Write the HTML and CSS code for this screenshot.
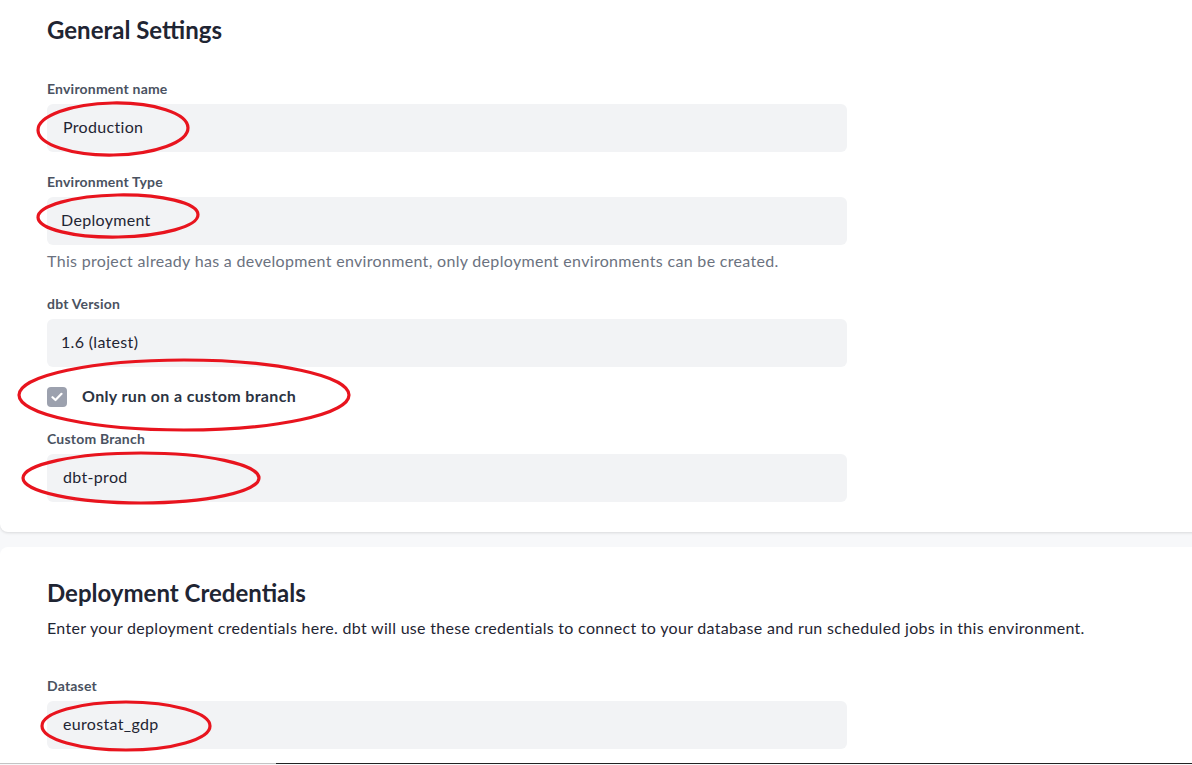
FILE: index.html
```html
<!DOCTYPE html>
<html lang="en">
<head>
<meta charset="utf-8">
<title>Environment settings</title>
<link rel="stylesheet" href="styles.css">
</head>
<body>
<div class="page">
  <section class="card card-first">
    <h2 class="card-title">General Settings</h2>

    <div class="field field-first">
      <div class="label">Environment name</div>
      <div class="input">Production</div>
    </div>

    <div class="field">
      <div class="label">Environment Type</div>
      <div class="input input-tight">Deployment</div>
      <div class="help">This project already has a development environment, only deployment environments can be created.</div>
    </div>

    <div class="field field-after-help">
      <div class="label">dbt Version</div>
      <div class="input input-tight">1.6 (latest)</div>
    </div>

    <div class="check-row">
      <span class="checkbox">
        <svg width="12" height="10" viewBox="0 0 12 10"><path d="M1.5 5.2 L4.5 8 L10.5 1.8" fill="none" stroke="#fff" stroke-width="2.2" stroke-linecap="round" stroke-linejoin="round"/></svg>
      </span>
      <span class="check-label">Only run on a custom branch</span>
    </div>

    <div class="field field-after-check">
      <div class="label">Custom Branch</div>
      <div class="input">dbt-prod</div>
    </div>
  </section>

  <section class="card card-second">
    <h2 class="card-title">Deployment Credentials</h2>
    <p class="desc">Enter your deployment credentials here. dbt will use these credentials to connect to your database and run scheduled jobs in this environment.</p>
    <div class="field field-dataset">
      <div class="label">Dataset</div>
      <div class="input">eurostat_gdp</div>
    </div>
  </section>

  <div class="bottom-line"><span class="line-light"></span><span class="line-dark"></span></div>
</div>

<svg class="marks" width="1192" height="765" viewBox="0 0 1192 765">
  <g fill="none" stroke="#e8141e" stroke-width="3.2">
    <ellipse cx="113" cy="129" rx="75" ry="26" transform="rotate(-1 113 129)"/>
    <ellipse cx="118" cy="216" rx="80" ry="21" transform="rotate(-1 118 216)"/>
    <ellipse cx="184" cy="395" rx="165" ry="35"/>
    <ellipse cx="141" cy="478" rx="118" ry="25"/>
    <ellipse cx="126" cy="726" rx="84" ry="24"/>
  </g>
</svg>
</body>
</html>
```

FILE: styles.css
```css
* { box-sizing: border-box; }

html, body {
  margin: 0;
  padding: 0;
}

body {
  width: 1192px;
  height: 765px;
  overflow: hidden;
  background: #f7f8fa;
  font-family: "Source Sans Pro", "Lato", "Liberation Sans", sans-serif;
  color: #1f2533;
  position: relative;
}

.page {
  display: flex;
  flex-direction: column;
  gap: 15px;
}

.card {
  background: #ffffff;
  margin-right: -24px;
  padding-left: 47px;
  display: flex;
  flex-direction: column;
  align-items: flex-start;
}

.card-first {
  margin-top: -20px;
  padding-top: 34px;
  padding-bottom: 30px;
  border-radius: 8px;
  box-shadow: 0 1px 3px rgba(0, 0, 0, 0.12);
}

.card-second {
  height: 216px;
  padding-top: 30px;
  border-radius: 8px 8px 0 0;
}

.card-title {
  margin: 0;
  font-size: 24px;
  line-height: 32px;
  font-weight: 700;
  color: #1f2533;
}

.field {
  display: flex;
  flex-direction: column;
  gap: 5px;
  margin-top: 20px;
}

.field-first { margin-top: 33px; }
.field-after-help { margin-top: 21px; }
.field-after-check { margin-top: 20px; }
.field-dataset { margin-top: 36px; }

.label {
  font-size: 14px;
  line-height: 20px;
  font-weight: 700;
  letter-spacing: 0.2px;
  color: #4a5261;
}

.input {
  width: 800px;
  height: 48px;
  border-radius: 6px;
  background: #f2f3f5;
  display: flex;
  align-items: center;
  padding-left: 16px;
  padding-bottom: 3px;
  font-size: 16px;
  letter-spacing: 0.32px;
  color: #1f2533;
}

.input-tight { padding-left: 14px; }

.help {
  margin-top: -1px;
  font-size: 16px;
  line-height: 24px;
  letter-spacing: 0.32px;
  color: #6b7280;
}

.check-row {
  display: flex;
  align-items: center;
  gap: 15px;
  margin-top: 18px;
  height: 24px;
}

.checkbox {
  width: 20px;
  height: 20px;
  border-radius: 4px;
  background: #9ca1ae;
  display: flex;
  align-items: center;
  justify-content: center;
}

.check-label {
  font-size: 16px;
  font-weight: 700;
  letter-spacing: 0.35px;
  color: #2b3342;
  margin-top: -3px;
}

.desc {
  margin: 7px 0 0;
  font-size: 16px;
  line-height: 24px;
  letter-spacing: 0.3px;
  color: #1f2533;
}

.bottom-line {
  display: flex;
  height: 1px;
  margin-top: -15px;
}

.line-light {
  width: 276px;
  background: #c4c4c4;
}

.line-dark {
  flex: 1;
  background: #222222;
}

.marks {
  position: absolute;
  left: 0;
  top: 0;
  pointer-events: none;
}
```
